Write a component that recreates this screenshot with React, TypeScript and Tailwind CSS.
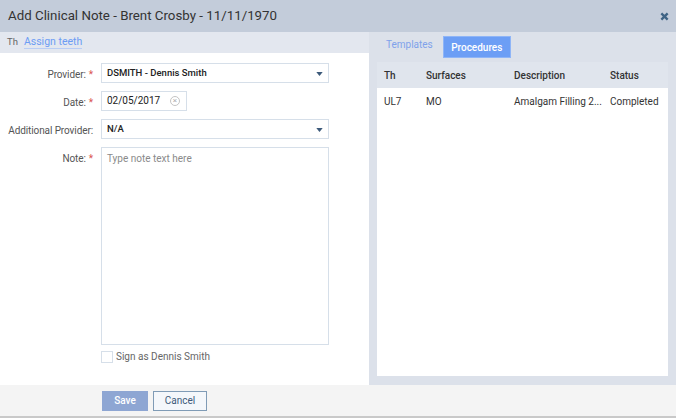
import React from 'react';

const Label: React.FC<{ text: string; required?: boolean }> = ({ text, required }) => (
  <div className="w-[101px] shrink-0 text-right text-[10px] text-[#555] pr-[8px] pt-[4px] whitespace-nowrap tracking-[-0.1px]">
    {text}
    {required && <span className="text-[#d9534f] ml-[3px]">*</span>}
  </div>
);

const Caret = () => (
  <svg width="7" height="4" viewBox="0 0 8 5" className="absolute right-[5px] top-[8px]">
    <path d="M0 0 L8 0 L4 5 Z" fill="#3d5a7a" />
  </svg>
);

const App: React.FC = () => {
  const font = { fontFamily: 'Roboto, "Liberation Sans", sans-serif' };
  return (
    <div className="w-[676px] h-[420px] flex flex-col bg-white overflow-hidden" style={font}>
      <div className="h-8 shrink-0 bg-[#c3ccda] flex items-center justify-between pl-[8px] pr-[7px]">
        <span className="text-[13.3px] text-[#333]">Add Clinical Note - Brent Crosby - 11/11/1970</span>
        <svg width="9" height="9" viewBox="0 0 10 10">
          <path d="M1.5 1.5 L8.5 8.5 M8.5 1.5 L1.5 8.5" stroke="#3f6485" strokeWidth="2.6" />
        </svg>
      </div>

      <div className="flex h-[353px] shrink-0">
        <div className="w-[369px] shrink-0 flex flex-col">
          <div className="h-[21px] bg-[#e3e7ef] flex items-center pl-[7px] gap-[6px]">
            <span className="text-[9.5px] text-[#666]">Th</span>
            <span className="text-[10.5px] text-[#6c9cf4] border-b border-[#b9cdf5] leading-[12px]">Assign teeth</span>
          </div>
          <div className="flex flex-col pt-[10px] gap-[8px]">
            <div className="flex">
              <Label text="Provider:" required />
              <div className="relative w-[228px] h-[20px] border border-[#d6dfe9] text-[9.5px] font-medium text-[#222] pl-[5px] leading-[18px]">
                DSMITH - Dennis Smith
                <Caret />
              </div>
            </div>
            <div className="flex">
              <Label text="Date:" required />
              <div className="relative w-[86px] h-[20px] border border-[#d6dfe9] text-[10px] text-[#222] pl-[5px] leading-[18px]">
                02/05/2017
                <span className="absolute right-[6px] top-[4px] w-[10px] h-[10px] rounded-full border border-[#c4c4c4] text-[8px] leading-[8px] text-center text-[#b0b0b0]">×</span>
              </div>
            </div>
            <div className="flex">
              <Label text="Additional Provider:" />
              <div className="relative w-[228px] h-[20px] border border-[#d6dfe9] text-[9.5px] font-medium text-[#222] pl-[5px] leading-[18px]">
                N/A
                <Caret />
              </div>
            </div>
            <div className="flex">
              <Label text="Note:" required />
              <div className="w-[228px] h-[198px] border border-[#d6dfe9] text-[10px] text-[#8a8a8a] pl-[5px] pt-[3px]">
                Type note text here
              </div>
            </div>
          </div>
          <div className="flex items-center ml-[101px] mt-[4px] gap-[3px]">
            <div className="w-[12px] h-[12px] border border-[#d6dfe9] bg-white" />
            <span className="text-[10px] text-[#666]">Sign as Dennis Smith</span>
          </div>
        </div>

        <div className="flex-1 bg-[#dce1ea] flex flex-col pl-[8px] pr-[8px] pb-[9px]">
          <div className="flex items-end h-[26px] pl-[9px] gap-[10px]">
            <span className="text-[10px] text-[#7fa2ea] pb-[6px]">Templates</span>
            <span className="h-[22px] w-[68px] justify-center bg-[#6c9ef5] border border-[#8fb5f7] text-white text-[10px] font-medium flex items-center">Procedures</span>
          </div>
          <div className="mt-[4px] flex-1 flex flex-col bg-white">
            <div className="h-[26px] bg-[#e0e5ed] flex items-center text-[10px] font-medium text-[#333]">
              <span className="w-[49px] pl-[7px]">Th</span>
              <span className="w-[88px]">Surfaces</span>
              <span className="w-[96px]">Description</span>
              <span>Status</span>
            </div>
            <div className="h-[26px] flex items-center text-[10px] text-[#333]">
              <span className="w-[49px] pl-[7px]">UL7</span>
              <span className="w-[88px]">MO</span>
              <span className="w-[96px] whitespace-nowrap">Amalgam Filling 2...</span>
              <span>Completed</span>
            </div>
          </div>
        </div>
      </div>

      <div className="h-[33px] shrink-0 bg-[#f4f4f4] flex items-center pl-[102px] gap-[5px] border-b-2 border-[#c9c9c9]">
        <button className="w-[46px] h-[20px] bg-[#8ea6d3] text-white text-[10px] font-medium">Save</button>
        <button className="w-[54px] h-[20px] bg-[#f4f7fb] border border-[#7f9bb6] text-[#3d5a7a] text-[10px]">Cancel</button>
      </div>
    </div>
  );
};

export default App;
